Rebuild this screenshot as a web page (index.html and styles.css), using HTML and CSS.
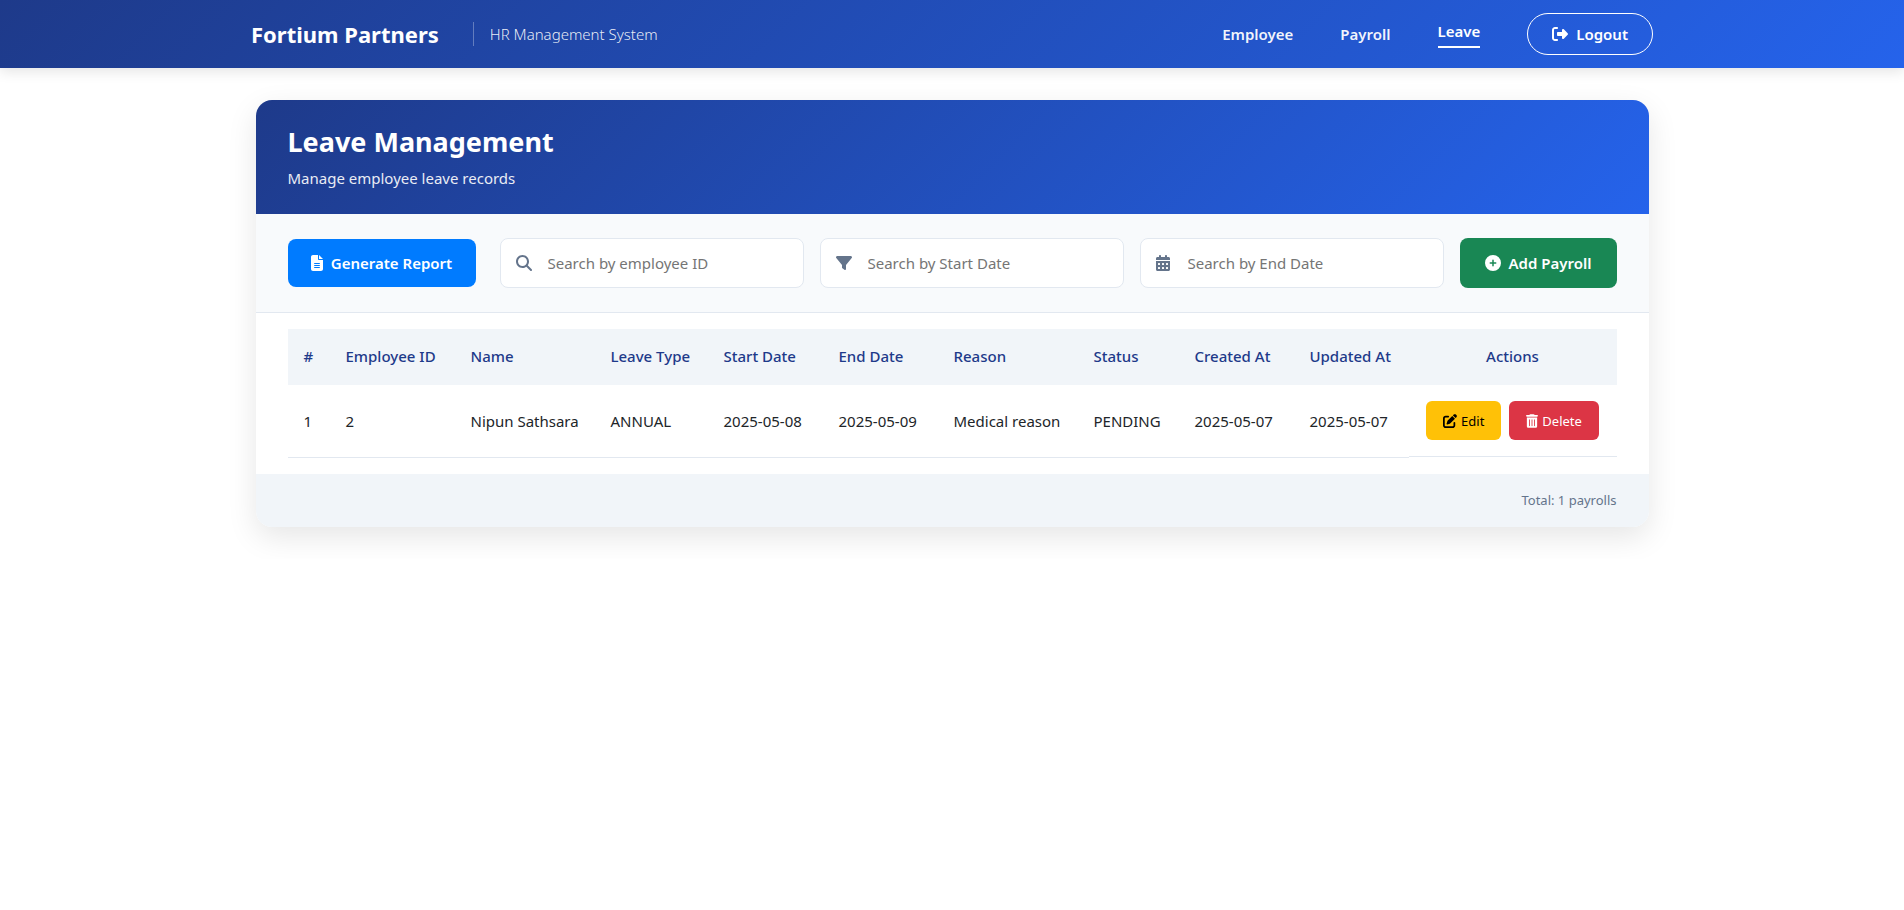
FILE: index.html
```html
<!DOCTYPE html>
<html lang="en">
<head>
<meta charset="utf-8">
<meta name="viewport" content="width=device-width, initial-scale=1">
<title>Leave Management</title>
<link rel="stylesheet" href="styles.css">
</head>
<body>
<header class="topbar">
  <div class="topbar-inner">
    <div class="brand">
      <span class="brand-name">Fortium Partners</span>
      <span class="brand-tagline">HR Management System</span>
    </div>
    <nav class="nav">
      <a class="nav-link" href="#employee">Employee</a>
      <a class="nav-link" href="#payroll">Payroll</a>
      <a class="nav-link active" href="#leave" aria-current="page">Leave</a>
      <button class="logout" type="button">
        <svg class="icon" viewBox="0 0 512 512" aria-hidden="true"><path d="M377.9 105.9L500.7 228.7c7.2 7.2 11.3 17.1 11.3 27.3s-4.1 20.1-11.3 27.3L377.9 406.1c-6.4 6.4-15 9.9-24 9.9c-18.7 0-33.9-15.2-33.9-33.9l0-62.1-128 0c-17.7 0-32-14.3-32-32l0-64c0-17.7 14.3-32 32-32l128 0 0-62.1c0-18.7 15.2-33.9 33.9-33.9c9 0 17.6 3.6 24 9.9zM160 96L96 96c-17.7 0-32 14.3-32 32l0 256c0 17.7 14.3 32 32 32l64 0c17.7 0 32 14.3 32 32s-14.3 32-32 32l-64 0c-53 0-96-43-96-96L0 128C0 75 43 32 96 32l64 0c17.7 0 32 14.3 32 32s-14.3 32-32 32z"/></svg>
        Logout
      </button>
    </nav>
  </div>
</header>

<main class="page">
  <section class="card">
    <div class="card-header">
      <h1 class="card-title">Leave Management</h1>
      <p class="card-subtitle">Manage employee leave records</p>
    </div>

    <div class="toolbar">
      <button class="btn btn-report" type="button">
        <svg class="icon icon-file" viewBox="0 0 384 512" aria-hidden="true"><path d="M64 0C28.7 0 0 28.7 0 64L0 448c0 35.3 28.7 64 64 64l256 0c35.3 0 64-28.7 64-64l0-288-128 0c-17.7 0-32-14.3-32-32L224 0 64 0zM256 0l0 128 128 0L256 0zM112 256l160 0c8.8 0 16 7.2 16 16s-7.2 16-16 16l-160 0c-8.8 0-16-7.2-16-16s7.2-16 16-16zm0 64l160 0c8.8 0 16 7.2 16 16s-7.2 16-16 16l-160 0c-8.8 0-16-7.2-16-16s7.2-16 16-16zm0 64l160 0c8.8 0 16 7.2 16 16s-7.2 16-16 16l-160 0c-8.8 0-16-7.2-16-16s7.2-16 16-16z"/></svg>
        Generate Report
      </button>
      <div class="filters">
        <label class="field">
          <svg class="icon" viewBox="0 0 512 512" aria-hidden="true"><path d="M416 208c0 45.9-14.9 88.3-40 122.7L502.6 457.4c12.5 12.5 12.5 32.8 0 45.3s-32.8 12.5-45.3 0L330.7 376c-34.4 25.2-76.8 40-122.7 40C93.1 416 0 322.9 0 208S93.1 0 208 0S416 93.1 416 208zM208 352a144 144 0 1 0 0-288 144 144 0 1 0 0 288z"/></svg>
          <input class="field-input" type="text" placeholder="Search by employee ID" aria-label="Search by employee ID">
        </label>
        <label class="field">
          <svg class="icon" viewBox="0 0 512 512" aria-hidden="true"><path d="M3.9 54.9C10.5 40.9 24.5 32 40 32l432 0c15.5 0 29.5 8.9 36.1 22.9s4.6 30.5-5.2 42.5L320 320.9 320 448c0 12.1-6.8 23.2-17.7 28.6s-23.8 4.3-33.5-3l-64-48c-8.1-6-12.8-15.5-12.8-25.6l0-79.1L9 97.3C-.7 85.4-2.8 68.8 3.9 54.9z"/></svg>
          <input class="field-input" type="text" placeholder="Search by Start Date" aria-label="Search by Start Date">
        </label>
        <label class="field">
          <svg class="icon icon-calendar" viewBox="0 0 448 512" aria-hidden="true"><path fill-rule="evenodd" d="M128 0c17.7 0 32 14.3 32 32l0 32 128 0 0-32c0-17.7 14.3-32 32-32s32 14.3 32 32l0 32 48 0c26.5 0 48 21.5 48 48l0 48L0 160l0-48C0 85.5 21.5 64 48 64l48 0 0-32c0-17.7 14.3-32 32-32zM0 192l448 0 0 272c0 26.5-21.5 48-48 48L48 512c-26.5 0-48-21.5-48-48L0 192zM80 256h32q16 0 16 16v32q0 16-16 16h-32q-16 0-16-16v-32q0-16 16-16zM208 256h32q16 0 16 16v32q0 16-16 16h-32q-16 0-16-16v-32q0-16 16-16zM336 256h32q16 0 16 16v32q0 16-16 16h-32q-16 0-16-16v-32q0-16 16-16zM80 384h32q16 0 16 16v32q0 16-16 16h-32q-16 0-16-16v-32q0-16 16-16zM208 384h32q16 0 16 16v32q0 16-16 16h-32q-16 0-16-16v-32q0-16 16-16zM336 384h32q16 0 16 16v32q0 16-16 16h-32q-16 0-16-16v-32q0-16 16-16z"/></svg>
          <input class="field-input" type="text" placeholder="Search by End Date" aria-label="Search by End Date">
        </label>
        <button class="btn btn-add" type="button">
          <svg class="icon" viewBox="0 0 512 512" aria-hidden="true"><path d="M256 512A256 256 0 1 0 256 0a256 256 0 1 0 0 512zM232 344l0-64-64 0c-13.3 0-24-10.7-24-24s10.7-24 24-24l64 0 0-64c0-13.3 10.7-24 24-24s24 10.7 24 24l0 64 64 0c13.3 0 24 10.7 24 24s-10.7 24-24 24l-64 0 0 64c0 13.3-10.7 24-24 24s-24-10.7-24-24z"/></svg>
          Add Payroll
        </button>
      </div>
    </div>

    <div class="table-wrap">
      <table class="records">
        <colgroup>
          <col class="col-index"><col class="col-id"><col class="col-text"><col class="col-type"><col class="col-date"><col class="col-date"><col class="col-text"><col class="col-status"><col class="col-date"><col class="col-date"><col class="col-actions">
        </colgroup>
        <thead>
          <tr>
            <th scope="col">#</th>
            <th scope="col">Employee ID</th>
            <th scope="col">Name</th>
            <th scope="col">Leave Type</th>
            <th scope="col">Start Date</th>
            <th scope="col">End Date</th>
            <th scope="col">Reason</th>
            <th scope="col">Status</th>
            <th scope="col">Created At</th>
            <th scope="col">Updated At</th>
            <th scope="col" class="center">Actions</th>
          </tr>
        </thead>
        <tbody>
          <tr>
            <td>1</td>
            <td>2</td>
            <td>Nipun Sathsara</td>
            <td>ANNUAL</td>
            <td>2025-05-08</td>
            <td>2025-05-09</td>
            <td>Medical reason</td>
            <td>PENDING</td>
            <td>2025-05-07</td>
            <td>2025-05-07</td>
            <td class="actions">
              <button class="btn-small btn-edit" type="button">
                <svg class="icon" viewBox="0 0 512 512" aria-hidden="true"><path d="M471.6 21.7c-21.9-21.9-57.3-21.9-79.2 0L362.3 51.7l97.9 97.9 30.1-30.1c21.9-21.9 21.9-57.3 0-79.2L471.6 21.7zm-299.2 220c-6.1 6.1-10.8 13.6-13.5 21.9l-29.6 88.8c-2.9 8.6-.6 18.1 5.8 24.6s15.9 8.7 24.6 5.8l88.8-29.6c8.2-2.7 15.7-7.4 21.9-13.5L437.7 172.3 339.7 74.3 172.4 241.7zM96 64C43 64 0 107 0 160L0 416c0 53 43 96 96 96l256 0c53 0 96-43 96-96l0-96c0-17.7-14.3-32-32-32s-32 14.3-32 32l0 96c0 17.7-14.3 32-32 32L96 448c-17.7 0-32-14.3-32-32l0-256c0-17.7 14.3-32 32-32l96 0c17.7 0 32-14.3 32-32s-14.3-32-32-32L96 64z"/></svg>
                Edit
              </button>
              <button class="btn-small btn-delete" type="button">
                <svg class="icon icon-trash" viewBox="0 0 448 512" aria-hidden="true"><path fill-rule="evenodd" d="M135.2 17.7C140.6 6.8 151.7 0 163.8 0L284.2 0c12.1 0 23.2 6.8 28.6 17.7L320 32l96 0c17.7 0 32 14.3 32 32s-14.3 32-32 32L32 96C14.3 96 0 81.7 0 64S14.3 32 32 32l96 0 7.2-14.3zM32 128l384 0 0 320c0 35.3-28.7 64-64 64L96 512c-35.3 0-64-28.7-64-64l0-320zM128 192q-16 0-16 16v224q0 16 16 16t16-16v-224q0-16-16-16zM224 192q-16 0-16 16v224q0 16 16 16t16-16v-224q0-16-16-16zM320 192q-16 0-16 16v224q0 16 16 16t16-16v-224q0-16-16-16z"/></svg>
                Delete
              </button>
            </td>
          </tr>
        </tbody>
      </table>
    </div>

    <div class="card-footer">Total: 1 payrolls</div>
  </section>
</main>
</body>
</html>
```

FILE: styles.css
```css
*, *::before, *::after { box-sizing: border-box; }

body {
  margin: 0;
  background: #fff;
  color: #212529;
  font-family: "Segoe UI", "Noto Sans", "Open Sans", sans-serif;
  font-size: 15px;
  line-height: 24px;
}

button, input { font: inherit; }
button { cursor: pointer; }

.icon {
  flex: none;
  width: 16px;
  height: 16px;
  fill: currentColor;
}
.icon-file { width: 12px; }
.icon-calendar { width: 14px; margin-right: 2px; }

/* Top bar */
.topbar {
  position: relative;
  background: linear-gradient(135deg, #1e3a8a, #2563eb);
  box-shadow: 0 4px 12px rgba(0, 0, 0, 0.1);
  color: #fff;
}
.topbar-inner {
  display: flex;
  align-items: center;
  justify-content: space-between;
  max-width: 1402px;
  min-height: 68px;
  margin: 0 auto;
}
.brand { display: flex; align-items: center; gap: 34px; }
.brand-name { font-size: 22px; font-weight: 700; }
.brand-tagline {
  padding-left: 16px;
  border-left: 1px solid rgba(255, 255, 255, 0.3);
  color: rgba(255, 255, 255, 0.9);
  font-weight: 300;
}
.nav { display: flex; align-items: center; gap: 47px; }
.nav-link {
  color: rgba(255, 255, 255, 0.95);
  font-weight: 600;
  text-decoration: none;
}
.nav-link.active {
  padding-bottom: 4px;
  border-bottom: 2px solid #fff;
  color: #fff;
  line-height: 22px;
}
.logout {
  display: flex;
  align-items: center;
  gap: 8px;
  padding: 8px 24px;
  border: 1px solid #fff;
  border-radius: 21px;
  background: transparent;
  color: #fff;
  font-weight: 600;
}

/* Card */
.page { padding: 32px 0; }
.card {
  max-width: 1393px;
  margin: 0 auto;
  border-radius: 16px;
  background: #fff;
  box-shadow: 0 10px 30px rgba(0, 0, 0, 0.1);
  overflow: hidden;
}
.card-header {
  padding: 24px 32px;
  background: linear-gradient(135deg, #1e3a8a, #2563eb);
  color: #fff;
}
.card-title {
  margin: 0 0 6px;
  font-size: 27px;
  font-weight: 700;
  line-height: 36px;
}
.card-subtitle { margin: 0; opacity: 0.9; }

/* Toolbar */
.toolbar {
  display: flex;
  align-items: center;
  gap: 24px;
  padding: 24px 32px;
  border-bottom: 1px solid #e2e8f0;
  background: #f8fafc;
}
.btn {
  display: flex;
  flex: none;
  align-items: center;
  justify-content: center;
  gap: 8px;
  border: 0;
  border-radius: 8px;
  color: #fff;
  font-weight: 600;
}
.btn-report { width: 188px; height: 48px; background: #007bff; }
.btn-add { width: 157px; background: #198754; }
.filters { display: flex; flex: 1; gap: 16px; }
.field {
  display: flex;
  flex: 1;
  align-items: center;
  gap: 16px;
  height: 50px;
  padding: 0 15px;
  border: 1px solid #e2e8f0;
  border-radius: 8px;
  background: #fff;
  color: #64748b;
}
.field-input {
  flex: 1;
  min-width: 0;
  padding: 0;
  border: 0;
  outline: 0;
  background: transparent;
  color: #212529;
}
.field-input::placeholder { color: #757575; opacity: 1; }

/* Records */
.table-wrap { padding: 16px 32px; overflow-x: auto; }
.records {
  width: 100%;
  border-spacing: 0;
  table-layout: fixed;
}
.col-index { width: 42px; }
.col-id { width: 125px; }
.col-text { width: 140px; }
.col-type { width: 113px; }
.col-date { width: 115px; }
.col-status { width: 101px; }
.col-actions { width: 208px; }
.records th {
  padding: 15px 16px 17px;
  background: #f1f5f9;
  color: #1e3a8a;
  font-weight: 500;
  text-align: left;
  white-space: nowrap;
}
.records th.center { text-align: center; }
.records td {
  height: 73px;
  padding: 0 16px;
  border-bottom: 1px solid #e2e8f0;
  white-space: nowrap;
}
.records td.actions {
  display: flex;
  justify-content: center;
  gap: 8px;
  height: auto;
  padding: 16px 0;
}
.btn-small {
  display: flex;
  align-items: center;
  justify-content: center;
  gap: 4px;
  height: 39px;
  padding: 0 17px;
  border: 0;
  border-radius: 6px;
  font-size: 13px;
}
.btn-small .icon { width: 14px; height: 14px; }
.btn-small .icon-trash { width: 12px; }
.btn-edit { background: #ffc107; color: #000; }
.btn-delete { background: #dc3545; color: #fff; }

.card-footer {
  padding: 14px 32px 15px;
  background: #f1f5f9;
  color: #64748b;
  font-size: 13px;
  text-align: right;
}
```
